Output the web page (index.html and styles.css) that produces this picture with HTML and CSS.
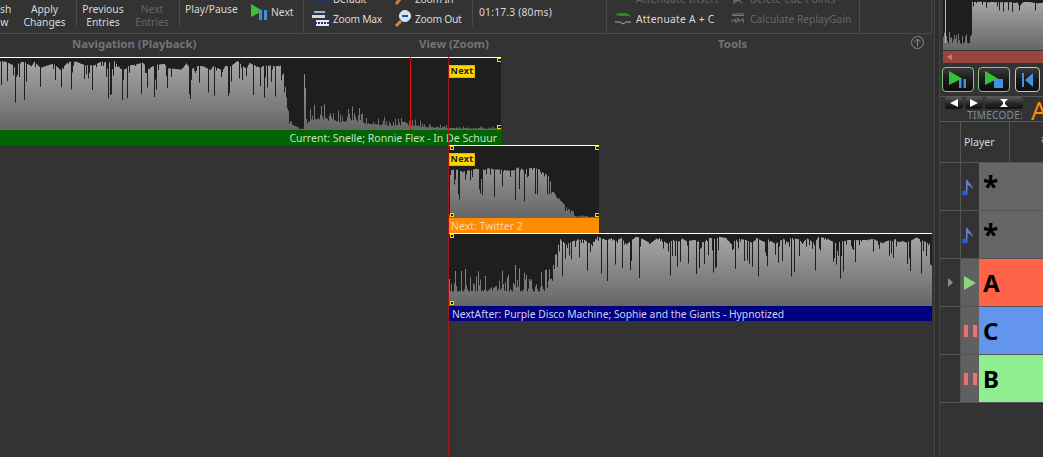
FILE: index.html
```html
<!DOCTYPE html>
<html lang="en">
  <head>
    <meta charset="UTF-8" />
    <title>Playlist Timeline</title>
    <link rel="stylesheet" href="styles.css">
  </head>
  <body>
    <div class="app">
      <main class="main">
        <div class="ribbon">
          <div class="tools-row">
            <div class="group nav-group">
              <div class="btn btn-first">sh<br>w&nbsp;</div>
              <div class="btn btn-apply">Apply<br>Changes</div>
              <div class="sep sep-a"></div>
              <div class="btn btn-prev">Previous<br>Entries</div>
              <div class="btn btn-next dim">Next<br>Entries</div>
              <div class="sep sep-b"></div>
              <div class="play-pause">Play/Pause</div>
              <div class="next-btn">
                <svg width="16" height="16" viewBox="0 0 16 16"><path d="M0 0L12 7L0 13Z" fill="#3cc03c"/><rect x="8" y="6" width="3" height="10" fill="#3f8fdc"/><rect x="13" y="6" width="3" height="10" fill="#3f8fdc"/></svg>
                <span>Next</span>
              </div>
            </div>
            <div class="group view-group">
              <div class="zoom-col">
                <div class="zoom-item">
                  <svg width="20" height="12" viewBox="0 0 20 12"><path d="M3 0V8M8 2V8M12 0V8M17 3V8" stroke="#2030a0" stroke-width="2"/></svg>
                  <span>Default</span>
                </div>
                <div class="zoom-item">
                  <svg width="20" height="16" viewBox="0 0 20 16"><rect x="2" y="0" width="11" height="2" fill="#8fb7e0"/><rect x="0" y="4" width="13" height="3" fill="#d8d8d8"/><path d="M14 1h1M14 5h1" stroke="#2030a0"/><rect x="4" y="9" width="13" height="6" fill="#e8e8e8"/><path d="M0 12H20" stroke="#2030a0" stroke-dasharray="2 1" stroke-width="2"/></svg>
                  <span>Zoom Max</span>
                </div>
              </div>
              <div class="zoom-col zoom-col-b">
                <div class="zoom-item">
                  <svg width="18" height="12" viewBox="0 0 18 12"><path d="M2 11L7 5" stroke="#c88038" stroke-width="3"/></svg>
                  <span>Zoom In</span>
                </div>
                <div class="zoom-item">
                  <svg width="18" height="18" viewBox="0 0 18 18"><path d="M2 16L7 11" stroke="#d08a3c" stroke-width="3"/><circle cx="11" cy="6" r="5.5" fill="#cfe6f7" stroke="#e8e8e8"/><rect x="8" y="5" width="6" height="2" fill="#1a4fa0"/></svg>
                  <span>Zoom Out</span>
                </div>
              </div>
              <div class="sep sep-time"></div>
              <div class="time">01:17.3 (80ms)</div>
            </div>
            <div class="group tools-group">
              <div class="zoom-col tools-a">
                <div class="zoom-item">
                  <svg width="20" height="12" viewBox="0 0 20 12"><circle cx="8" cy="1" r="3" fill="none" stroke="#888"/></svg>
                  <span class="dim">Attenuate Insert</span>
                </div>
                <div class="zoom-item">
                  <svg width="20" height="14" viewBox="0 0 20 14"><path d="M1 3h1l1-2 1 3 1-3 1 3 1-3 1 3 1-3 1 3 1-3 1 3 1-2 1 2h2" fill="none" stroke="#1f9a2a"/><path d="M0 10H5L8 12L11 10H16" fill="none" stroke="#aaa"/></svg>
                  <span>Attenuate A + C</span>
                </div>
              </div>
              <div class="zoom-col tools-b">
                <div class="zoom-item">
                  <svg width="14" height="12" viewBox="0 0 14 12"><path d="M3 0L5 3L12 0L9 7L12 11L7 8L2 11Z" fill="#666"/></svg>
                  <span class="dim">Delete Cue Points</span>
                </div>
                <div class="zoom-item">
                  <svg width="14" height="12" viewBox="0 0 14 12"><path d="M1 1H13M1 2.5H13" stroke="#777"/><path d="M0 8H3L4 6L5 10L7 5L8 9L9 7L13 7M12 5V10" fill="none" stroke="#777"/></svg>
                  <span class="dim">Calculate ReplayGain</span>
                </div>
              </div>
            </div>
            <div class="group filler-group"></div>
          </div>
          <div class="labels-row">
            <div class="label label-nav">Navigation (Playback)</div>
            <div class="label label-view">View (Zoom)</div>
            <div class="label label-tools">Tools</div>
            <svg class="collapse" width="15" height="15" viewBox="0 0 15 15"><circle cx="7.5" cy="7.5" r="6" fill="none" stroke="#8a8a8a"/><path d="M7.5 11.5V4M4.5 7L7.5 4L10.5 7" fill="none" stroke="#8a8a8a"/></svg>
          </div>
        </div>

        <div class="timeline">
          <section class="clip-item clip-current">
            <div class="top-line"></div>
            <svg class="wave" data-wave="current" width="501" height="72"></svg>
            <div class="clip-title title-current"><span>Current: Snelle; Ronnie Flex - In De Schuur</span></div>
            <div class="next-tag">Next</div>
            <i class="handle h-tr"></i>
            <i class="handle h-br"></i>
            <div class="cursor-red"></div>
          </section>
          <section class="clip-item clip-next">
            <div class="top-line"></div>
            <svg class="wave" data-wave="next" width="150" height="72"></svg>
            <div class="clip-title title-next"><span>Next: Twitter 2</span></div>
            <div class="next-tag">Next</div>
            <i class="handle h-tl"></i>
            <i class="handle h-tr"></i>
            <i class="handle h-bl"></i>
            <i class="handle h-br"></i>
          </section>
          <section class="clip-item clip-after">
            <div class="top-line"></div>
            <svg class="wave" data-wave="after" width="483" height="72"></svg>
            <div class="clip-title title-after"><span>NextAfter: Purple Disco Machine; Sophie and the Giants - Hypnotized</span></div>
            <i class="handle h-tl"></i>
            <i class="handle h-bl"></i>
          </section>
          <div class="playhead"></div>
        </div>
      </main>

      <div class="splitter"></div>

      <aside class="side">
        <div class="mini">
          <svg class="wave" data-wave="mini" width="100" height="50"></svg>
          <div class="mini-marker"></div>
          <div class="mini-scroll"><b></b></div>
        </div>
        <div class="transport">
          <div class="tbtn tbtn-green">
            <svg width="20" height="20" viewBox="0 0 20 20"><path d="M1 1L14 8.5L1 15Z" fill="#33c233"/><rect x="11" y="9" width="2.5" height="9" fill="#3f93e0"/><rect x="15.5" y="9" width="2.5" height="9" fill="#3f93e0"/></svg>
          </div>
          <div class="tbtn tbtn-green">
            <svg width="20" height="20" viewBox="0 0 20 20"><path d="M1 1L14 8.5L1 15Z" fill="#33c233"/><rect x="10" y="9" width="9" height="9" fill="#3f93e0"/></svg>
          </div>
          <div class="tbtn tbtn-yellow">
            <svg width="14" height="16" viewBox="0 0 14 16"><rect x="1" y="1" width="2" height="14" fill="#3f93e0"/><path d="M12 1V15L4 8Z" fill="#3f93e0"/></svg>
          </div>
        </div>
        <div class="tc-row">
          <div class="tc-left">
            <div class="tc-btns">
              <div class="tc-btn tc-s"><svg width="8" height="8" viewBox="0 0 8 8"><path d="M8 0V8L0 4Z" fill="#fff"/></svg></div>
              <div class="tc-btn tc-s"><svg width="8" height="8" viewBox="0 0 8 8"><path d="M0 0V8L8 4Z" fill="#fff"/></svg></div>
              <div class="tc-btn tc-w"><svg width="8" height="8" viewBox="0 0 8 8"><path d="M0 0H8L5 3V5L8 8H0L3 5V3Z" fill="#fff"/></svg></div>
            </div>
            <div class="tc-label">TIMECODE:</div>
          </div>
          <div class="tc-value">A</div>
        </div>
        <div class="grid">
          <div class="row row-head">
            <div class="c-a"></div>
            <div class="c-b">Player</div>
            <div class="c-c"><span class="sort">#</span></div>
          </div>
          <div class="row">
            <div class="c-a"></div>
            <div class="c-icon dark"><svg class="note" width="12" height="17" viewBox="0 0 12 17"><path d="M5 1L4.5 14" stroke="#6f8fe0" stroke-width="1.4"/><path d="M5 1C7 4 11 6 11 11C10 8 8 7 5 6" fill="#5f82d8"/><ellipse cx="3" cy="14" rx="3" ry="2.4" fill="#2a5fd0"/></svg></div>
            <div class="c-name star">*</div>
          </div>
          <div class="row">
            <div class="c-a"></div>
            <div class="c-icon dark"><svg class="note" width="12" height="17" viewBox="0 0 12 17"><path d="M5 1L4.5 14" stroke="#6f8fe0" stroke-width="1.4"/><path d="M5 1C7 4 11 6 11 11C10 8 8 7 5 6" fill="#5f82d8"/><ellipse cx="3" cy="14" rx="3" ry="2.4" fill="#2a5fd0"/></svg></div>
            <div class="c-name star">*</div>
          </div>
          <div class="row">
            <div class="c-a"><svg width="5" height="9" viewBox="0 0 5 9"><path d="M0 0L5 4.5L0 9Z" fill="#8a8a8a"/></svg></div>
            <div class="c-icon"><svg width="12" height="14" viewBox="0 0 12 14"><path d="M0 0L12 7L0 14Z" fill="#8fd47f"/></svg></div>
            <div class="c-name p-a">A</div>
          </div>
          <div class="row">
            <div class="c-a"></div>
            <div class="c-icon"><svg width="13" height="12" viewBox="0 0 13 12"><rect width="4" height="12" fill="#f07070"/><rect x="9" width="4" height="12" fill="#f07070"/></svg></div>
            <div class="c-name p-c">C</div>
          </div>
          <div class="row">
            <div class="c-a"></div>
            <div class="c-icon"><svg width="13" height="12" viewBox="0 0 13 12"><rect width="4" height="12" fill="#f07070"/><rect x="9" width="4" height="12" fill="#f07070"/></svg></div>
            <div class="c-name p-b">B</div>
          </div>
        </div>
      </aside>
    </div>
    <script src="waves.js"></script>
  </body>
</html>
```

FILE: styles.css
```css
* {
  box-sizing: border-box;
}

body {
  margin: 0;
  width: 1043px;
  height: 457px;
  overflow: hidden;
  background-color: #333333;
  font-family: "Noto Sans", "DejaVu Sans", sans-serif;
  font-size: 10.3px;
  color: #d8d8d8;
}

.app {
  display: flex;
  height: 457px;
}

.main {
  width: 934px;
  flex: none;
  display: flex;
  flex-direction: column;
}

.splitter {
  width: 6px;
  flex: none;
  border-left: 1px solid #444;
  border-right: 1px solid #444;
  background-color: #2e2e2e;
}

.side {
  width: 103px;
  flex: none;
  overflow: hidden;
}

/* ribbon */
.ribbon {
  height: 57px;
  flex: none;
}

.tools-row {
  display: flex;
  height: 34px;
}

.group {
  display: flex;
  height: 34px;
  border-right: 1px solid #4a4a4a;
  border-bottom: 1px solid #4a4a4a;
  flex: none;
}

.nav-group {
  width: 304px;
}

.view-group {
  width: 303px;
  padding-left: 8px;
}

.tools-group {
  width: 253px;
  padding-left: 8px;
}

.filler-group {
  width: 72px;
}

.btn {
  flex: none;
  text-align: center;
  line-height: 13px;
  padding-top: 3px;
  height: 30px;
}

.btn-first {
  width: 11px;
  overflow: hidden;
  text-align: right;
}

.btn-apply {
  width: 55px;
  margin-left: 6px;
}

.btn-prev {
  width: 46px;
  margin-left: 3px;
}

.btn-next {
  width: 42px;
  margin-left: 5px;
}

.sep {
  width: 1px;
  height: 26px;
  background-color: #4a4a4a;
  flex: none;
}

.sep-a {
  margin-left: 4px;
}

.sep-b {
  margin-left: 6px;
}

.dim {
  color: #666666;
}

.play-pause {
  margin-left: 5px;
  padding-top: 2px;
  width: 58px;
  flex: none;
  white-space: nowrap;
}

.next-btn {
  display: flex;
  align-items: center;
  gap: 4px;
  margin-left: 8px;
  height: 24px;
}

.zoom-col {
  display: flex;
  flex-direction: column;
  width: 82px;
  flex: none;
  height: 33px;
  justify-content: flex-end;
  padding-bottom: 4px;
  overflow: hidden;
}

.zoom-item {
  display: flex;
  align-items: center;
  gap: 1px;
  height: 20px;
  flex: none;
  white-space: nowrap;
}

.zoom-item svg {
  flex: none;
}

.view-group .zoom-item span {
  letter-spacing: -0.3px;
}

.zoom-col-b .zoom-item {
  gap: 3px;
}

.sep-time {
  margin-left: -4px;
}

.time {
  margin-left: 6px;
  padding-top: 5px;
  letter-spacing: 0.2px;
  white-space: nowrap;
}

.tools-a {
  width: 116px;
}

.tools-a .zoom-item span {
  letter-spacing: 0.25px;
}

.tools-b {
  width: 128px;
}

.tools-b .zoom-item {
  gap: 5px;
}

.labels-row {
  height: 23px;
  position: relative;
}

.label {
  position: absolute;
  top: 2px;
  font-size: 11.4px;
  font-weight: 700;
  color: #747474;
  white-space: nowrap;
}

.label-nav {
  left: 72px;
}

.label-view {
  left: 419px;
}

.label-tools {
  left: 718px;
}

.collapse {
  position: absolute;
  left: 910px;
  top: 1px;
}

/* timeline */
.timeline {
  position: relative;
  flex: 1;
}

.clip-item {
  position: absolute;
}

.clip-current {
  left: 0;
  top: 0;
  width: 501px;
  height: 88px;
}

.clip-next {
  left: 449px;
  top: 88px;
  width: 150px;
  height: 88px;
}

.clip-after {
  left: 449px;
  top: 176px;
  width: 483px;
  height: 88px;
}

.top-line {
  height: 1px;
  background-color: #ffffff;
}

.wave {
  display: block;
  background-color: #1e1e1e;
}

.clip-title {
  height: 15px;
  line-height: 17px;
  font-size: 10.5px;
  white-space: nowrap;
  overflow: hidden;
}

.title-current {
  background-color: #006400;
  color: #c4e2c4;
  text-align: right;
  padding-right: 4px;
}

.title-next {
  background-color: #ff8c00;
  color: #ffd2a0;
  padding-left: 2px;
}

.title-after {
  background-color: #000080;
  color: #d2d2f0;
  font-size: 10.3px;
  padding-left: 3px;
}

.next-tag {
  position: absolute;
  left: 449px;
  top: 8px;
  width: 26px;
  height: 13px;
  background-color: #ffd700;
  border: 1px solid #e0b400;
  color: #222222;
  font-size: 9px;
  font-weight: 700;
  line-height: 10px;
  text-align: center;
  letter-spacing: 0.3px;
}

.clip-next .next-tag {
  left: 0;
}

.handle {
  position: absolute;
  width: 4px;
  height: 4px;
  border: 1px solid #ffd700;
  background-color: #1e1e1e;
}

.h-tl {
  left: 1px;
  top: 1px;
}

.h-tr {
  right: 0;
  top: 1px;
  border-right: none;
}

.h-bl {
  left: 1px;
  top: 68px;
}

.h-br {
  right: 0;
  top: 68px;
  border-right: none;
}

.cursor-red {
  position: absolute;
  left: 410px;
  top: 0;
  width: 1px;
  height: 73px;
  background-color: #e01010;
}

.playhead {
  position: absolute;
  left: 448px;
  top: 0;
  bottom: 0;
  width: 1px;
  background-color: #a01818;
}

/* right panel */
.mini {
  height: 64px;
  position: relative;
  overflow: hidden;
  padding-left: 3px;
}

.mini-marker {
  position: absolute;
  left: 5px;
  top: 0;
  width: 1px;
  height: 43px;
  background-color: #e8c030;
}

.mini-scroll {
  position: absolute;
  left: 3px;
  top: 51px;
  width: 100px;
  height: 12px;
  background-color: #96463a;
}

.mini-scroll b {
  position: absolute;
  left: 4px;
  top: 3px;
  border-right: 5px solid #d07a6c;
  border-top: 3px solid transparent;
  border-bottom: 3px solid transparent;
}

.transport {
  display: flex;
  gap: 4px;
  padding: 3px 0 0 2px;
  height: 32px;
}

.tbtn {
  width: 32px;
  height: 25px;
  flex: none;
  border-radius: 4px;
  background: linear-gradient(#3a3a3a, #1a1a1a 50%, #0e0e0e);
  display: flex;
  align-items: center;
  justify-content: center;
}

.tbtn-green {
  border: 1px solid #84c884;
}

.tbtn-yellow {
  border: 1px solid #d0cc84;
  width: 25px;
  margin-left: 1px;
}

.tc-row {
  display: flex;
  height: 26px;
  border-top: 1px solid #555;
  border-bottom: 1px solid #555;
}

.tc-left {
  width: 83px;
  flex: none;
  padding-left: 5px;
}

.tc-btns {
  display: flex;
  gap: 2px;
  height: 12px;
}

.tc-btn {
  height: 12px;
  border-radius: 3px;
  background: linear-gradient(#5a5a5a, #2a2a2a 50%, #111);
  display: flex;
  align-items: center;
  justify-content: center;
}

.tc-s {
  width: 18px;
}

.tc-w {
  width: 38px;
}

.tc-label {
  text-align: right;
  font-size: 10px;
  line-height: 12px;
  color: #7c8ea4;
  letter-spacing: 0.3px;
}

.tc-value {
  font-size: 25px;
  line-height: 26px;
  color: #ff8c00;
  margin-left: 8px;
}

.row {
  display: flex;
  height: 48px;
  border-bottom: 1px solid #555;
}

.row-head {
  height: 41px;
}

.c-a {
  width: 21px;
  flex: none;
  background-color: #333;
  border-right: 1px solid #555;
  display: flex;
  align-items: center;
  justify-content: center;
}

.c-b {
  width: 49px;
  flex: none;
  border-right: 1px solid #555;
  padding: 13px 0 0 3px;
  font-size: 10.5px;
}

.c-c {
  flex: 1;
  padding: 10px 0 0 31px;
}

.sort {
  color: #ccc;
}

.c-icon {
  width: 18px;
  flex: none;
  background-color: #606060;
  display: flex;
  align-items: center;
  justify-content: center;
}

.c-icon.dark {
  background-color: #333;
}

.note {
  margin-top: 2px;
  margin-right: 5px;
}

.c-name {
  flex: 1;
  color: #000;
  font-size: 24px;
  font-weight: 700;
  line-height: 47px;
  padding-left: 4px;
  background-color: #666;
}

.star {
  font-size: 28px;
  line-height: 46px;
}

.p-a {
  background-color: #ff6347;
}

.p-c {
  background-color: #6495ed;
}

.p-b {
  background-color: #90ee90;
}
```

FILE: waves.js
```js
const svgNs = "http://www.w3.org/2000/svg";

// small seeded random, so the picture is the same each run
function makeRandom(seed) {
  let s = seed;
  return () => {
    s = (s * 16807) % 2147483647;
    return s / 2147483647;
  };
}

// envelope: [x, level] points, level 0..1 of the height, linear in between
function level(env, x) {
  for (let i = 1; i < env.length; i++) {
    if (x <= env[i][0]) {
      const a = env[i - 1], b = env[i];
      return a[1] + ((b[1] - a[1]) * (x - a[0])) / (b[0] - a[0] || 1);
    }
  }
  return env[env.length - 1][1];
}

const waves = {
  current: {
    seed: 77, gaps: 0.42, depth: 0.55, wiggle: 0.14, quiet: [306, 501],
    env: [[0, 0.98], [280, 0.97], [284, 0.8], [287, 0.35], [292, 0.08], [300, 0.02], [303, 0.02], [304, 0.8], [305, 0.6], [307, 0.2], [310, 0.38], [322, 0.43], [340, 0.3], [353, 0.38], [367, 0.24], [390, 0.17], [410, 0.18], [430, 0.1], [447, 0.07], [501, 0.045]],
  },
  next: {
    seed: 31, gaps: 0.36, depth: 0.7, wiggle: 0.08, quiet: [125, 150],
    env: [[0, 0.05], [1, 0.67], [8, 0.7], [20, 0.72], [90, 0.72], [100, 0.64], [103, 0.38], [112, 0.25], [118, 0.14], [130, 0.05], [150, 0.03]],
  },
  after: {
    seed: 5, gaps: 0.46, depth: 0.6, wiggle: 0.12, quiet: [0, 104],
    env: [[0, 0.58], [103, 0.58], [104, 0.68], [111, 0.98], [483, 0.97]],
  },
  mini: {
    seed: 13, gaps: 0.4, depth: 0.2, wiggle: 0.03, quiet: [0, 28],
    env: [[0, 0.38], [28, 0.38], [29, 1], [100, 0.98]],
  },
};

function drawWave(svg) {
  const w = waves[svg.dataset.wave];
  const width = +svg.getAttribute("width");
  const height = +svg.getAttribute("height");
  const rnd = makeRandom(w.seed);
  let points = `0,${height}`;

  // slow noise for the wandering top edge
  let from = rnd(), to = rnd(), span = 5, step = 0;

  for (let x = 0; x < width; x++) {
    if (step >= span) {
      from = to;
      to = rnd();
      span = 3 + Math.floor(rnd() * 7);
      step = 0;
    }
    const slow = from + ((to - from) * step) / span;
    step++;

    const top = level(w.env, x);
    let lvl;
    if (x >= w.quiet[0] && x <= w.quiet[1]) {
      // quiet part: low floor with thin peaks up to the envelope
      lvl = top * (0.35 + 0.65 * Math.pow(rnd(), 3));
    } else {
      let dip = slow * w.wiggle;
      if (rnd() < w.gaps) dip += Math.pow(rnd(), 3) * w.depth;
      lvl = top * (1 - dip);
    }
    const y = height - Math.max(lvl, 0.01) * (height - 1);
    points += ` ${x},${y.toFixed(1)} ${x + 1},${y.toFixed(1)}`;
  }
  points += ` ${width},${height}`;

  const id = "grad-" + svg.dataset.wave;
  const defs = document.createElementNS(svgNs, "defs");
  defs.innerHTML = `<linearGradient id="${id}" gradientUnits="userSpaceOnUse" x1="0" y1="0" x2="0" y2="${height}"><stop offset="0" stop-color="#a8a8a8"/><stop offset="1" stop-color="#666666"/></linearGradient>`;
  svg.appendChild(defs);

  const poly = document.createElementNS(svgNs, "polygon");
  poly.setAttribute("points", points);
  poly.setAttribute("fill", `url(#${id})`);
  svg.appendChild(poly);
}

document.querySelectorAll("svg.wave").forEach(drawWave);
```
